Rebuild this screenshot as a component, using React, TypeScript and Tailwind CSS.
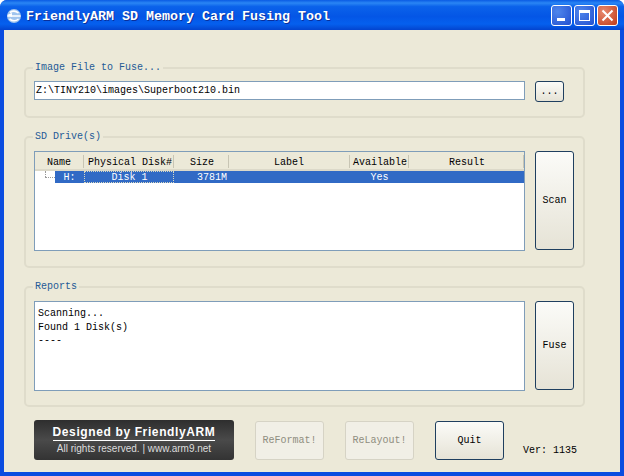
import React from "react";

const mono = "font-['Liberation_Mono',monospace]";

function Group({ label, className, children }: { label: string; className: string; children: React.ReactNode }) {
  return (
    <section className={`relative ml-5 w-[561px] rounded-[5px] border-2 border-[#dfdccb] pl-[8px] flex gap-[10px] ${className}`}>
      <span className={`absolute left-[7px] top-[-7px] bg-[#ece9d8] px-[2px] text-[10px] leading-[12px] text-[#245a96] ${mono}`}>{label}</span>
      {children}
    </section>
  );
}

function TallButton({ label, className }: { label: string; className: string }) {
  return (
    <button className={`flex items-center justify-center rounded-[3px] border border-[#1f3f5f] bg-gradient-to-b from-[#fbfbf8] to-[#e6e3d6] text-[10px] text-black ${mono} ${className}`}>
      {label}
    </button>
  );
}

function FooterButton({ label, disabled }: { label: string; disabled?: boolean }) {
  return (
    <button
      className={`flex h-[39px] w-[69px] items-center justify-center rounded-[3px] border text-[10px] ${mono} ${
        disabled
          ? "border-[#d6d3c5] bg-[#f1efe6] text-[#8f8d80]"
          : "border-[#1f3f5f] bg-gradient-to-b from-[#fbfbf8] to-[#e6e3d6] text-black"
      }`}
    >
      {label}
    </button>
  );
}

const columns = [
  { name: "Name", w: "w-[49px]", pad: "pl-0" },
  { name: "Physical Disk#", w: "w-[90px]", pad: "pl-[3px]" },
  { name: "Size", w: "w-[55px]", pad: "pl-[2px]" },
  { name: "Label", w: "w-[121px]", pad: "pl-0" },
  { name: "Available", w: "w-[59px]", pad: "pl-[2px]" },
  { name: "Result", w: "w-[115px]", pad: "pl-[2px]" },
];

export default function App() {
  return (
    <div className="h-[476px] w-[624px] overflow-hidden bg-white">
      <div className="flex h-full w-full flex-col overflow-hidden rounded-t-[7px] bg-[#0a4ce0]">
        <header className="flex h-[30px] shrink-0 items-center bg-[linear-gradient(to_bottom,#0a5be4_0%,#2a86f4_10%,#0b62ea_22%,#0456e6_55%,#0560ee_80%,#0344cf_100%)] pl-[6px] pr-[6px]">
          <svg width="16" height="16" viewBox="0 0 16 16" className="mt-[2px] shrink-0">
            <circle cx="8" cy="8" r="7" fill="#9fc4ee" />
            <path d="M1.5 8 H14.5 M4 4.5 C7 2.5 10 3 12.5 5 M3.5 11 C7 13.5 10 13 12.5 11" stroke="#ffffff" strokeWidth="1.6" fill="none" />
            <path d="M1 7 L6 5 L6 9 Z" fill="#ffffff" />
          </svg>
          <h1 className={`ml-[4px] pt-[3px] text-[13.33px] font-bold leading-none text-white [text-shadow:1px_1px_0_#0a2f9a] ${mono}`}>
            FriendlyARM SD Memory Card Fusing Tool
          </h1>
          <div className="ml-auto flex gap-[2px]">
            <div className="flex h-[21px] w-[21px] items-end rounded-[3px] border border-white bg-[radial-gradient(circle_at_30%_30%,#4f86ec,#2250d0)] pb-[4px] pl-[5px]">
              <div className="h-[3px] w-[8px] bg-white" />
            </div>
            <div className="flex h-[21px] w-[21px] items-center justify-center rounded-[3px] border border-white bg-[radial-gradient(circle_at_30%_30%,#4f86ec,#2250d0)]">
              <div className="h-[11px] w-[11px] border border-t-[3px] border-white" />
            </div>
            <div className="flex h-[21px] w-[21px] items-center justify-center rounded-[3px] border border-white bg-[radial-gradient(circle_at_30%_30%,#e88a70,#c03a18)]">
              <svg width="13" height="13" viewBox="0 0 13 13">
                <path d="M1.5 1.5 L11.5 11.5 M11.5 1.5 L1.5 11.5" stroke="#ffffff" strokeWidth="2" />
              </svg>
            </div>
          </div>
        </header>

        <main className="mx-[4px] mb-[4px] flex flex-1 flex-col rounded-none bg-[#ece9d8]">
          <Group label="Image File to Fuse..." className="mt-[37px] h-[51px] pt-[12px]">
            <div className={`flex h-[19px] w-[491px] items-center border border-[#7f9db9] bg-white pl-[1px] text-[10px] text-black ${mono}`}>
              Z:\TINY210\images\Superboot210.bin
            </div>
            <TallButton label="..." className="h-[21px] w-[29px]" />
          </Group>

          <Group label="SD Drive(s)" className="mt-[18px] h-[132px] pt-[13px]">
            <div className={`h-[100px] w-[491px] border border-[#7f9db9] bg-white text-[10px] text-black ${mono}`}>
              <div className="flex h-[19px] bg-[#ece9d8] shadow-[inset_0_-2px_0_#dcd9c9]">
                {columns.map((c) => (
                  <div key={c.name} className={`flex items-center justify-center ${c.w}`}>
                    <span className={`flex-1 pt-[1px] text-center ${c.pad}`}>{c.name}</span>
                    <span className="h-[13px] w-[1px] bg-[#c8c5b4]" />
                  </div>
                ))}
              </div>
              <div className="flex h-[12px] leading-[14px]">
                <div className="relative w-[20px] shrink-0">
                  <div className="absolute left-[10px] top-0 h-[6px] border-l border-dotted border-[#9a9a9a]" />
                  <div className="absolute left-[10px] top-[6px] w-[10px] border-t border-dotted border-[#9a9a9a]" />
                </div>
                <div className="flex flex-1 bg-[#316ac5] text-white">
                  <div className="w-[29px] text-center">H:</div>
                  <div className="w-[90px] border border-dotted border-[#d8d8c0] pl-[1px] text-center leading-[12px]">Disk 1</div>
                  <div className="w-[53px] text-right">3781M</div>
                  <div className="w-[123px]" />
                  <div className="w-[59px] text-center">Yes</div>
                </div>
              </div>
            </div>
            <TallButton label="Scan" className="h-[99px] w-[39px]" />
          </Group>

          <Group label="Reports" className="mt-[18px] h-[121px] pt-[13px]">
            <div className={`h-[90px] w-[491px] whitespace-pre border border-[#7f9db9] bg-white pl-[3px] pt-[5px] text-[10px] leading-[13.5px] text-black ${mono}`}>
              {"Scanning...\nFound 1 Disk(s)\n----"}
            </div>
            <TallButton label="Fuse" className="h-[89px] w-[39px]" />
          </Group>

          <footer className="ml-[30px] mt-[13px] flex items-start gap-[21px]">
            <div className="flex h-[40px] w-[200px] shrink-0 flex-col items-center rounded-[3px] bg-gradient-to-b from-[#2e2e2e] via-[#4a4a4a] to-[#333333] pt-[6px] font-['Liberation_Sans',sans-serif] text-white">
              <div className="border-b border-white pb-[1px] text-[12px] font-bold leading-[13px] tracking-[0.62px]">
                Designed by FriendlyARM
              </div>
              <div className="mt-[1px] text-[10px] leading-[13px] text-[#dddddd]">All rights reserved. | www.arm9.net</div>
            </div>
            <div className="mt-[1px] flex items-center gap-[21px]">
              <FooterButton label="ReFormat!" disabled />
              <FooterButton label="ReLayout!" disabled />
              <FooterButton label="Quit" />
            </div>
            <span className={`ml-[-2px] mt-[25px] text-[10px] leading-[12px] text-black ${mono}`}>Ver: 1135</span>
          </footer>
        </main>
      </div>
    </div>
  );
}
